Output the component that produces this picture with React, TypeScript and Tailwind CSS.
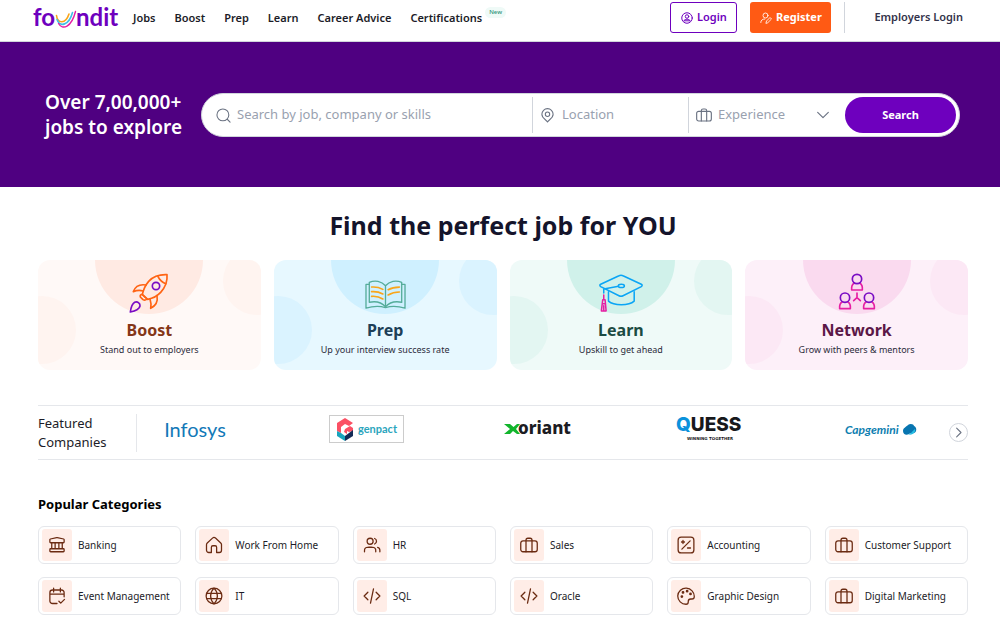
import * as React from 'react';

interface IconProps {
  className?: string;
}

interface FeatureCardProps {
  title: string;
  subtitle: string;
  background: string;
  main: string;
  side: string;
  titleColor: string;
  icon: React.ReactNode;
}

interface CategoryProps {
  name: string;
  icon: React.ReactNode;
}

function StrokeIcon({ className, children }: IconProps & { children: React.ReactNode }) {
  return (
    <svg
      viewBox="0 0 24 24"
      fill="none"
      stroke="currentColor"
      strokeWidth="1.7"
      strokeLinecap="round"
      strokeLinejoin="round"
      className={className ?? 'size-[18px]'}
      aria-hidden="true"
    >
      {children}
    </svg>
  );
}

const BriefcaseIcon = ({ className }: IconProps) => (
  <StrokeIcon className={className}>
    <rect x="1" y="6.500" width="22" height="14.500" rx="3" />
    <path d="M8 21V5.500A2.500 2.500 0 0 1 10.500 3h3A2.500 2.500 0 0 1 16 5.500V21" />
  </StrokeIcon>
);

const BankIcon = () => (
  <StrokeIcon>
    <path d="M5 9v8M9.500 9v8M14.500 9v8M19 9v8M3.500 17h17a1 1 0 0 1 1 1v2a1 1 0 0 1-1 1h-17a1 1 0 0 1-1-1v-2a1 1 0 0 1 1-1ZM11.600 2.100 3.100 4a.8.8 0 0 0-.6.8V8a1 1 0 0 0 1 1h17a1 1 0 0 0 1-1V4.800a.8.8 0 0 0-.6-.8l-8.500-1.900a2 2 0 0 0-.8 0Z" />
  </StrokeIcon>
);

const HomeIcon = () => (
  <StrokeIcon>
    <path d="M8.500 22v-7a2 2 0 0 1 2-2h3a2 2 0 0 1 2 2v7M8.500 22H5a3 3 0 0 1-3-3v-7.500a3 3 0 0 1 1-2.200l7-6.500a3 3 0 0 1 4 0l7 6.500a3 3 0 0 1 1 2.200V19a3 3 0 0 1-3 3h-3.500" />
  </StrokeIcon>
);

const UsersIcon = () => (
  <StrokeIcon>
    <path d="M22.500 21v-2c0-1.860-1.270-3.430-3-3.870M15.500 3.290a4 4 0 0 1 0 7.420M17 21c0-1.860 0-2.800-.3-3.530a4 4 0 0 0-2.170-2.160C13.800 15 12.860 15 11 15H8c-1.860 0-2.800 0-3.530.3a4 4 0 0 0-2.170 2.170C2 18.200 2 19.140 2 21" />
    <circle cx="9.5" cy="7" r="4" />
  </StrokeIcon>
);

const CodeIcon = () => (
  <StrokeIcon>
    <path d="m17.500 17 5-5-5-5M6.500 7l-5 5 5 5M14 2.500l-4 19" />
  </StrokeIcon>
);

const CalendarIcon = () => (
  <StrokeIcon>
    <path d="M21.500 9.500h-19M21.500 13V7.500A3.500 3.500 0 0 0 18 4H6a3.500 3.500 0 0 0-3.500 3.500v11A3.500 3.500 0 0 0 6 22h6M16.500 1.500v5M7.500 1.500v5M14.500 19l2.500 2.500 5-5" />
  </StrokeIcon>
);

const GlobeIcon = () => (
  <StrokeIcon>
    <circle cx="12" cy="12" r="10.500" />
    <path d="M2.500 8.500h19M2.500 15.500h19M12 1.500c3 3 4.500 6.500 4.500 10.500S15 19.500 12 22.500c-3-3-4.500-6.500-4.500-10.500S9 4.500 12 1.500Z" />
  </StrokeIcon>
);

const AccountingIcon = () => (
  <StrokeIcon>
    <rect x="1.500" y="1.500" width="21" height="21" rx="4" />
    <path d="m6.500 17.500 11-11M6 8h4M8 6v4M14 16h4" />
  </StrokeIcon>
);

const PaletteIcon = () => (
  <StrokeIcon>
    <path d="M1 12a11 11 0 0 0 11 11c1.700 0 3-1.300 3-3v-.6c0-1.900 1.500-3.400 3.400-3.400H20c1.700 0 3-1.300 3-3A11 11 0 0 0 1 12Z" />
    <circle cx="6.500" cy="12.800" r="1" fill="currentColor" />
    <circle cx="8" cy="7.300" r="1" fill="currentColor" />
    <circle cx="13.500" cy="5.600" r="1" fill="currentColor" />
    <circle cx="18" cy="9.300" r="1" fill="currentColor" />
  </StrokeIcon>
);

const SearchIcon = ({ className }: IconProps) => (
  <StrokeIcon className={className}>
    <circle cx="11" cy="11" r="9.500" />
    <path d="m18 18 4.500 4.500" />
  </StrokeIcon>
);

const PinIcon = ({ className }: IconProps) => (
  <StrokeIcon className={className}>
    <circle cx="12" cy="10" r="3.500" />
    <path d="M12 22.500c-1.500-3.500-9-6-9-12.500a9 9 0 0 1 18 0c0 6.500-7.500 9-9 12.500Z" />
  </StrokeIcon>
);

const RocketArt = () => (
  <svg viewBox="0 0 120 120" className="size-10" fill="none" strokeWidth="5" strokeLinejoin="round" strokeLinecap="round" aria-hidden="true">
    <g stroke="#ff6414">
      <path d="M114 5C92 4 72 11 59 25 47 39 43 51 40 64l16 15c14-3 27-8 39-21C108 44 116 26 114 5Z" />
      <path d="M87 11c5 10 12 17 23 21" />
      <path d="M51 36c-18-3-32 4-38 20 10-4 19-5 29-2M84 68c3 16-3 30-19 38 2-10 1-19-2-28" />
      <path d="m39 64q-7 1-5 8l8 8q6 4 12-2Z" />
    </g>
    <circle cx="81" cy="39" r="11" stroke="#7a0cc4" />
    <path d="M4 117c2-14 4-24 13-29 8-4 17 3 16 11-2 10-14 15-29 18Z" stroke="#7a0cc4" />
  </svg>
);

const BookArt = () => (
  <svg viewBox="0 0 124 120" className="h-10 w-[41px]" fill="none" strokeWidth="4" strokeLinejoin="round" strokeLinecap="round" aria-hidden="true">
    <g stroke="#55ac9a">
      <path d="M62 38v64M62 38C50 24 30 20 13 28v60c19-4 37 0 49 14 12-14 30-18 49-14V28C94 20 74 24 62 38Z" />
      <path d="M13 34H3v72c22-7 42-7 59-2 17-5 37-5 59 2V34h-10" />
    </g>
    <g stroke="#f9a51a" strokeWidth="5">
      <path d="M20 42c12-1 23 1 34 7M20 56c12-1 23 1 34 7M20 70c12-1 23 1 34 8M70 50c10-6 21-8 34-8M70 66c10-6 21-9 34-9" />
    </g>
  </svg>
);

const CapArt = () => (
  <svg viewBox="0 0 130 112" className="h-[38px] w-[44px]" fill="none" strokeWidth="4.500" strokeLinejoin="round" strokeLinecap="round" aria-hidden="true">
    <g stroke="#0aa5f5">
      <path d="M59 5 5 30q-5 3 0 7l54 27q6 3 12 0l54-27q5-4 0-7L71 5q-6-3-12 0Z" />
      <path d="M28 52v28c16 14 60 14 76 0V52M14 56V44l44-8" />
      <ellipse cx="66" cy="35" rx="9" ry="5" />
    </g>
    <path d="M14 62v12M11 76h7l3 33H7Z M10 88h9M14 94v14" stroke="#e61ea3" />
  </svg>
);

const Person = ({ x, y }: { x: number; y: number }) => (
  <g>
    <path d={`M${x - 8} ${y + 12}c-8 4-9 11-8 21h32c1-10 0-17-8-21`} stroke="#e61ea3" />
    <circle cx={x} cy={y} r="14" stroke="#7a0cc4" />
  </g>
);

const NetworkArt = () => (
  <svg viewBox="0 0 120 120" className="size-10" fill="none" strokeWidth="5" strokeLinejoin="round" strokeLinecap="round" aria-hidden="true">
    <Person x={60} y={18} />
    <Person x={24} y={74} />
    <Person x={96} y={74} />
    <path d="M60 60v14M50 83l10-9 10 9" stroke="#e61ea3" />
  </svg>
);

const FounditLogo = () => (
  <svg viewBox="0 0 88 30" className="h-[30px] w-[88px]" role="img" aria-label="foundit">
    <g fill="#6e00be" fontFamily="Lato, sans-serif" fontWeight="700" fontSize="24">
      <text x="1" y="23">fo</text>
      <text x="44" y="23">ndit</text>
    </g>
    <g fill="none" strokeLinecap="round">
      <path d="M24.500 12.500c1 8 9 9 12.500-1.500" stroke="#f9a51a" strokeWidth="1.600" />
      <path d="M25 16.500c3 8 12 6 15.500-7" stroke="#3fbfe6" strokeWidth="1.600" />
      <path d="M26.500 20.500c4 7 13 4 17-12" stroke="#e61ea3" strokeWidth="1.400" />
    </g>
  </svg>
);

const InfosysLogo = () => (
  <svg viewBox="0 0 75 30" className="h-[30px] w-[75px]" role="img" aria-label="Infosys">
    <text x="37" y="23" textAnchor="middle" fontFamily="'Liberation Sans Narrow', Lato, sans-serif" fontSize="20" fill="#1279b8">Infosys</text>
  </svg>
);

const GenpactLogo = () => (
  <svg viewBox="0 0 75 30" className="h-[30px] w-[75px]" role="img" aria-label="genpact">
    <rect x="0.500" y="1.500" width="74" height="27" fill="#fff" stroke="#ccc" />
    <path d="m16 4-8 5v8l4 2v-6l4-3 4 2 4-3Z" fill="#fb5064" />
    <path d="m16 15 5-3 3 2v3l-4 1-2-1v3l-3-2Z" fill="#fb5064" />
    <path d="m8 17 4 2 4 3v5l-8-5Z" fill="#18a4bd" />
    <path d="M16 22v5l8-5v-6Z" fill="#142b57" />
    <text x="29" y="19" fontFamily="Lato, sans-serif" fontWeight="700" fontSize="11" fill="#2ba5bd">genpact</text>
  </svg>
);

const XoriantLogo = () => (
  <svg viewBox="0 0 75 30" className="h-[30px] w-[75px]" role="img" aria-label="xoriant">
    <path d="M3 10h6l3.500 3 3.500-3h3l-4 5 4 5h-3l-4-3-3 3H3l6-5Z" fill="#12b52c" />
    <text x="17" y="20" fontFamily="'Noto Sans', sans-serif" fontWeight="800" fontSize="17" fill="#1c1c22">oriant</text>
  </svg>
);

const QuessLogo = () => (
  <svg viewBox="0 0 75 30" className="h-[30px] w-[75px]" role="img" aria-label="Quess, winning together">
    <text x="4" y="17" fontFamily="Inter, sans-serif" fontWeight="800" fontSize="19" fill="#17181c">
      <tspan fill="#0b92dc">Q</tspan>UESS
    </text>
    <text x="38" y="26" textAnchor="middle" fontFamily="'DejaVu Sans', sans-serif" fontWeight="700" fontSize="4" fill="#17181c">WINNING TOGETHER</text>
  </svg>
);

const CapgeminiLogo = () => (
  <svg viewBox="0 0 75 30" className="h-[30px] w-[75px]" role="img" aria-label="Capgemini">
    <text x="2" y="20" fontFamily="Lato, sans-serif" fontWeight="700" fontStyle="italic" fontSize="12" fill="#0e7eb0">Capgemini</text>
    <path d="M60 17c0-3 3-4 5-6 2-2 6-1 6 1 3 1 3 6 0 7-2 1-4 0-5 1-3 2-6 0-6-3Z" fill="#0875b0" />
    <path d="M72 15c1 3-2 6-7 6 3-1 4-4 7-6Z" fill="#25bde3" />
  </svg>
);

const navItems = ['Jobs', 'Boost', 'Prep', 'Learn', 'Career Advice', 'Certifications'];

const features: FeatureCardProps[] = [
  {
    title: 'Boost',
    subtitle: 'Stand out to employers',
    background: 'bg-[#fff9f7]',
    main: 'bg-[#ffeae3]',
    side: 'bg-[#fff4f0]',
    titleColor: 'text-[#853718]',
    icon: <RocketArt />,
  },
  {
    title: 'Prep',
    subtitle: 'Up your interview success rate',
    background: 'bg-[#e7f8ff]',
    main: 'bg-[#cff0ff]',
    side: 'bg-[#daf3ff]',
    titleColor: 'text-[#1d3f58]',
    icon: <BookArt />,
  },
  {
    title: 'Learn',
    subtitle: 'Upskill to get ahead',
    background: 'bg-[#effaf8]',
    main: 'bg-[#d0f1ea]',
    side: 'bg-[#e3f6f2]',
    titleColor: 'text-[#1c4b43]',
    icon: <CapArt />,
  },
  {
    title: 'Network',
    subtitle: 'Grow with peers & mentors',
    background: 'bg-[#fdf0f9]',
    main: 'bg-[#fadaef]',
    side: 'bg-[#fce8f5]',
    titleColor: 'text-[#5b1747]',
    icon: <NetworkArt />,
  },
];

const categories: CategoryProps[] = [
  { name: 'Banking', icon: <BankIcon /> },
  { name: 'Work From Home', icon: <HomeIcon /> },
  { name: 'HR', icon: <UsersIcon /> },
  { name: 'Sales', icon: <BriefcaseIcon /> },
  { name: 'Accounting', icon: <AccountingIcon /> },
  { name: 'Customer Support', icon: <BriefcaseIcon /> },
  { name: 'Event Management', icon: <CalendarIcon /> },
  { name: 'IT', icon: <GlobeIcon /> },
  { name: 'SQL', icon: <CodeIcon /> },
  { name: 'Oracle', icon: <CodeIcon /> },
  { name: 'Graphic Design', icon: <PaletteIcon /> },
  { name: 'Digital Marketing', icon: <BriefcaseIcon /> },
];

function Header() {
  return (
    <header className="flex h-[42px] items-start border-b border-gray-300 pr-[37px] pl-8 text-[11px] font-semibold text-[#1c1c28]">
      <a href="#home" className="mt-[3px] mr-[13px]">
        <FounditLogo />
      </a>
      <nav className="mt-[10px] flex gap-[19px] leading-4">
        {navItems.map((item) => (
          <a key={item} href="#nav">{item}</a>
        ))}
      </nav>
      <span className="mt-[7px] ml-[3px] rounded-full bg-[#effaf7] px-1 text-[6px] leading-[11px] font-medium text-[#2c9277]">New</span>
      <div className="mt-[2px] ml-auto flex items-center">
        <button type="button" className="flex h-[31px] w-[67px] items-center justify-center gap-1 rounded-[3px] border border-[#6e00be] text-[#6e00be]">
          <StrokeIcon className="size-3">
            <circle cx="12" cy="12" r="10.500" strokeWidth="2" />
            <circle cx="12" cy="9" r="3.500" strokeWidth="2" />
            <path d="M6 17c3-3.500 9-3.500 12 0Z" strokeWidth="2" />
          </StrokeIcon>
          Login
        </button>
        <button type="button" className="ml-[13px] flex h-[31px] w-[81px] items-center justify-center gap-1 rounded-[3px] bg-[#ff5a14] font-bold text-white">
          <StrokeIcon className="size-3">
            <circle cx="11" cy="7" r="5" />
            <path d="M1.500 21c0-5 4-7 8-7M12 22l1-4 7-7 3 3-7 7Z" />
          </StrokeIcon>
          Register
        </button>
        <a href="#employers" className="ml-[13px] flex h-[31px] items-center border-l border-gray-300 pl-[29px] text-[#33334a]">Employers Login</a>
      </div>
    </header>
  );
}

function Hero() {
  return (
    <section className="flex h-[145px] items-center bg-[#4f0081] pt-px pr-10 pl-[45px]">
      <h1 className="w-[156px] shrink-0 text-[19px] leading-[25px] font-semibold text-white">
        Over 7,00,000+
        <br />
        jobs to explore
      </h1>
      <form
        className="flex h-11 flex-1 items-center rounded-full border border-gray-300 bg-white pr-[3px] pl-[14px] text-[13px] text-gray-500"
        onSubmit={(e) => e.preventDefault()}
      >
        <label className="flex h-9 min-w-0 flex-1 items-center gap-[6px]">
          <SearchIcon className="size-[15px] shrink-0" />
          <input aria-label="Search by job, company or skills" placeholder="Search by job, company or skills" className="w-full min-w-0 outline-none placeholder:text-gray-400" />
        </label>
        <label className="flex h-9 w-[156px] items-center gap-[7px] border-l border-gray-300 pl-[7px]">
          <PinIcon className="size-[15px] shrink-0" />
          <input aria-label="Location" placeholder="Location" className="w-full min-w-0 outline-none placeholder:text-gray-400" />
        </label>
        <div className="relative flex h-9 w-[157px] items-center gap-[6px] border-l border-gray-300 pr-4 pl-[7px]">
          <BriefcaseIcon className="size-4 shrink-0" />
          <select aria-label="Experience" className="w-full appearance-none text-gray-400 outline-none">
            <option>Experience</option>
          </select>
          <StrokeIcon className="pointer-events-none absolute right-[14px] size-4">
            <path d="m4 8 8 8 8-8" />
          </StrokeIcon>
        </div>
        <button type="submit" className="h-9 w-[111px] rounded-full bg-[#6e00be] text-[11px] font-bold text-white">Search</button>
      </form>
    </section>
  );
}

function FeatureCard({ title, subtitle, background, main, side, titleColor, icon }: FeatureCardProps) {
  return (
    <a href="#feature" className={`relative flex h-[110px] flex-col items-center overflow-hidden rounded-xl pt-3 ${background}`}>
      <span className={`absolute -top-[54px] left-1/2 size-[108px] -translate-x-1/2 rounded-full ${main}`} />
      <span className={`absolute top-9 -left-[30px] size-[68px] rounded-full ${side}`} />
      <span className={`absolute -top-[13px] -right-[30px] size-[68px] rounded-full ${side}`} />
      <span className="relative flex h-[42px] items-center">{icon}</span>
      <span className={`relative mt-1 text-base leading-6 font-bold ${titleColor}`}>{title}</span>
      <span className="relative text-[9px] leading-4 text-[#2b2b3b]">{subtitle}</span>
    </a>
  );
}

function FeaturedCompanies() {
  return (
    <section className="mt-[35px] flex h-[55px] items-center border-y border-gray-200">
      <h3 className="flex h-[38px] w-[99px] shrink-0 items-center border-r border-gray-200 text-[13px] leading-[19px] text-[#1c1c28]">
        Featured
        <br />
        Companies
      </h3>
      <div className="mr-[31px] mb-2 ml-[21px] flex flex-1 justify-between">
        <InfosysLogo />
        <GenpactLogo />
        <XoriantLogo />
        <QuessLogo />
        <CapgeminiLogo />
      </div>
      <button type="button" aria-label="Next companies" className="flex size-[19px] items-center justify-center rounded-full border border-gray-300 text-gray-500">
        <StrokeIcon className="size-[15px]">
          <path d="m9 5 7 7-7 7" />
        </StrokeIcon>
      </button>
    </section>
  );
}

function Category({ name, icon }: CategoryProps) {
  return (
    <a href="#category" className="flex h-[38px] items-center gap-[6px] rounded-md border border-gray-200 pl-[3px] text-[10px] text-[#1c1c28]">
      <span className="flex h-8 w-[30px] items-center justify-center rounded-[3px] bg-[#ffede7] text-[#6b2b12]">{icon}</span>
      {name}
    </a>
  );
}

export default function App() {
  return (
    <div className="min-h-screen overflow-hidden bg-white font-['Noto_Sans',sans-serif]">
      <Header />
      <Hero />
      <main className="pr-8 pb-1 pl-[38px]">
        <h2 className="pt-5 text-center text-[25px] leading-9 font-bold text-[#14142b]">Find the perfect job for YOU</h2>
        <div className="mt-[17px] grid grid-cols-4 gap-[13px]">
          {features.map((feature) => (
            <FeatureCard key={feature.title} {...feature} />
          ))}
        </div>
        <FeaturedCompanies />
        <h2 className="mt-[34px] text-[13px] leading-5 font-bold text-black">Popular Categories</h2>
        <div className="mt-3 grid grid-cols-6 gap-x-[14px] gap-y-[13px]">
          {categories.map((category) => (
            <Category key={category.name} {...category} />
          ))}
        </div>
      </main>
    </div>
  );
}
